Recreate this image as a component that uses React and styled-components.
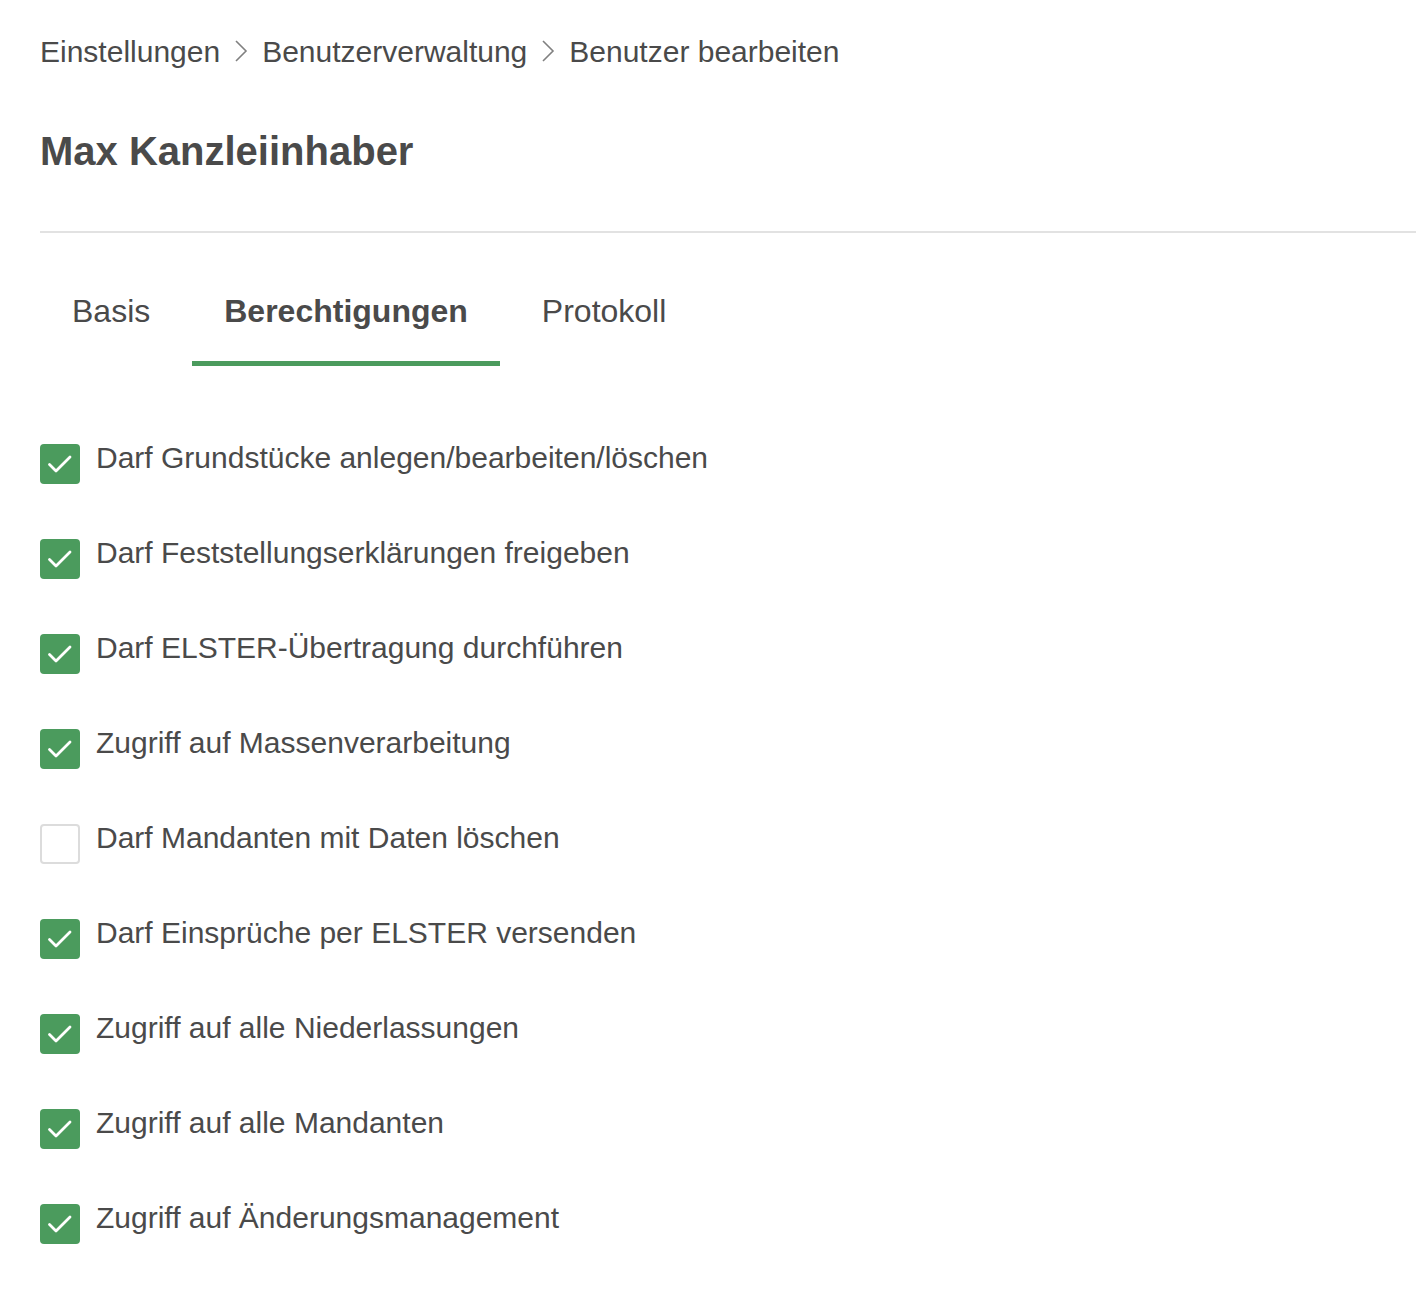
import React, { useState } from "react";
import styled, { createGlobalStyle } from "styled-components";

const GlobalStyle = createGlobalStyle`
  html, body {
    margin: 0;
    padding: 0;
    background: #ffffff;
  }
  body {
    font-family: "Liberation Sans", Arial, Helvetica, sans-serif;
    color: #4a4a4a;
  }
`;

const Page = styled.div`
  padding: 34px 0 40px 40px;
`;

const Breadcrumb = styled.nav`
  display: flex;
  align-items: center;
  gap: 14px;
  font-size: 30px;
  line-height: 36px;
  color: #4a4a4a;

  svg {
    flex: none;
    margin-top: -2px;
  }
`;

const Title = styled.h1`
  margin: 57px 0 0 0;
  font-size: 40px;
  line-height: 48px;
  font-weight: 700;
  color: #4a4a4a;
`;

const Divider = styled.hr`
  margin: 56px 0 0 0;
  border: none;
  height: 2px;
  background: #e2e2e2;
`;

const Tabs = styled.div`
  display: flex;
  gap: 10px;
  margin-top: 58px;
`;

const Tab = styled.button`
  background: none;
  border: none;
  padding: 0 32px 30px;
  font-family: inherit;
  font-size: 32px;
  line-height: 40px;
  color: #4a4a4a;
  font-weight: ${(p) => (p.$active ? 700 : 400)};
  border-bottom: 5px solid ${(p) => (p.$active ? "#4b9b5d" : "transparent")};
  cursor: pointer;
`;

const List = styled.div`
  display: flex;
  flex-direction: column;
  gap: 51px;
  margin-top: 74px;
`;

const Row = styled.label`
  display: flex;
  align-items: flex-start;
  gap: 16px;
  cursor: pointer;
`;

const Box = styled.span`
  flex: none;
  box-sizing: border-box;
  width: 40px;
  height: 40px;
  margin-top: 4px;
  border-radius: 4px;
  background: ${(p) => (p.$checked ? "#4b9b5d" : "#ffffff")};
  border: ${(p) => (p.$checked ? "none" : "2px solid #dcdcdc")};
  display: flex;
  align-items: center;
  justify-content: center;

  svg {
    display: block;
  }
`;

const LabelText = styled.span`
  font-size: 30px;
  line-height: 36px;
  color: #4a4a4a;
`;

const Chevron = () => (
  <svg width="14" height="22" viewBox="0 0 14 22">
    <polyline
      points="2,1 12,11 2,21"
      fill="none"
      stroke="#808080"
      strokeWidth="1.6"
    />
  </svg>
);

const Check = () => (
  <svg width="40" height="40" viewBox="0 0 40 40">
    <polyline
      points="9.5,20.5 16,27 30,13"
      fill="none"
      stroke="#ffffff"
      strokeWidth="2.8"
      strokeLinecap="round"
      strokeLinejoin="round"
    />
  </svg>
);

const permissions = [
  { id: 1, label: "Darf Grundstücke anlegen/bearbeiten/löschen", checked: true },
  { id: 2, label: "Darf Feststellungserklärungen freigeben", checked: true },
  { id: 3, label: "Darf ELSTER-Übertragung durchführen", checked: true },
  { id: 4, label: "Zugriff auf Massenverarbeitung", checked: true },
  { id: 5, label: "Darf Mandanten mit Daten löschen", checked: false },
  { id: 6, label: "Darf Einsprüche per ELSTER versenden", checked: true },
  { id: 7, label: "Zugriff auf alle Niederlassungen", checked: true },
  { id: 8, label: "Zugriff auf alle Mandanten", checked: true },
  { id: 9, label: "Zugriff auf Änderungsmanagement", checked: true },
];

const App = () => {
  const [tab, setTab] = useState("Berechtigungen");
  const [items, setItems] = useState(permissions);

  const toggle = (id) =>
    setItems((prev) =>
      prev.map((it) => (it.id === id ? { ...it, checked: !it.checked } : it))
    );

  return (
    <>
      <GlobalStyle />
      <Page>
        <Breadcrumb>
          <span>Einstellungen</span>
          <Chevron />
          <span>Benutzerverwaltung</span>
          <Chevron />
          <span>Benutzer bearbeiten</span>
        </Breadcrumb>
        <Title>Max Kanzleiinhaber</Title>
        <Divider />
        <Tabs>
          {["Basis", "Berechtigungen", "Protokoll"].map((t) => (
            <Tab key={t} $active={t === tab} onClick={() => setTab(t)}>
              {t}
            </Tab>
          ))}
        </Tabs>
        <List>
          {items.map((it) => (
            <Row key={it.id} onClick={() => toggle(it.id)}>
              <Box $checked={it.checked}>{it.checked && <Check />}</Box>
              <LabelText>{it.label}</LabelText>
            </Row>
          ))}
        </List>
      </Page>
    </>
  );
};

export default App;
